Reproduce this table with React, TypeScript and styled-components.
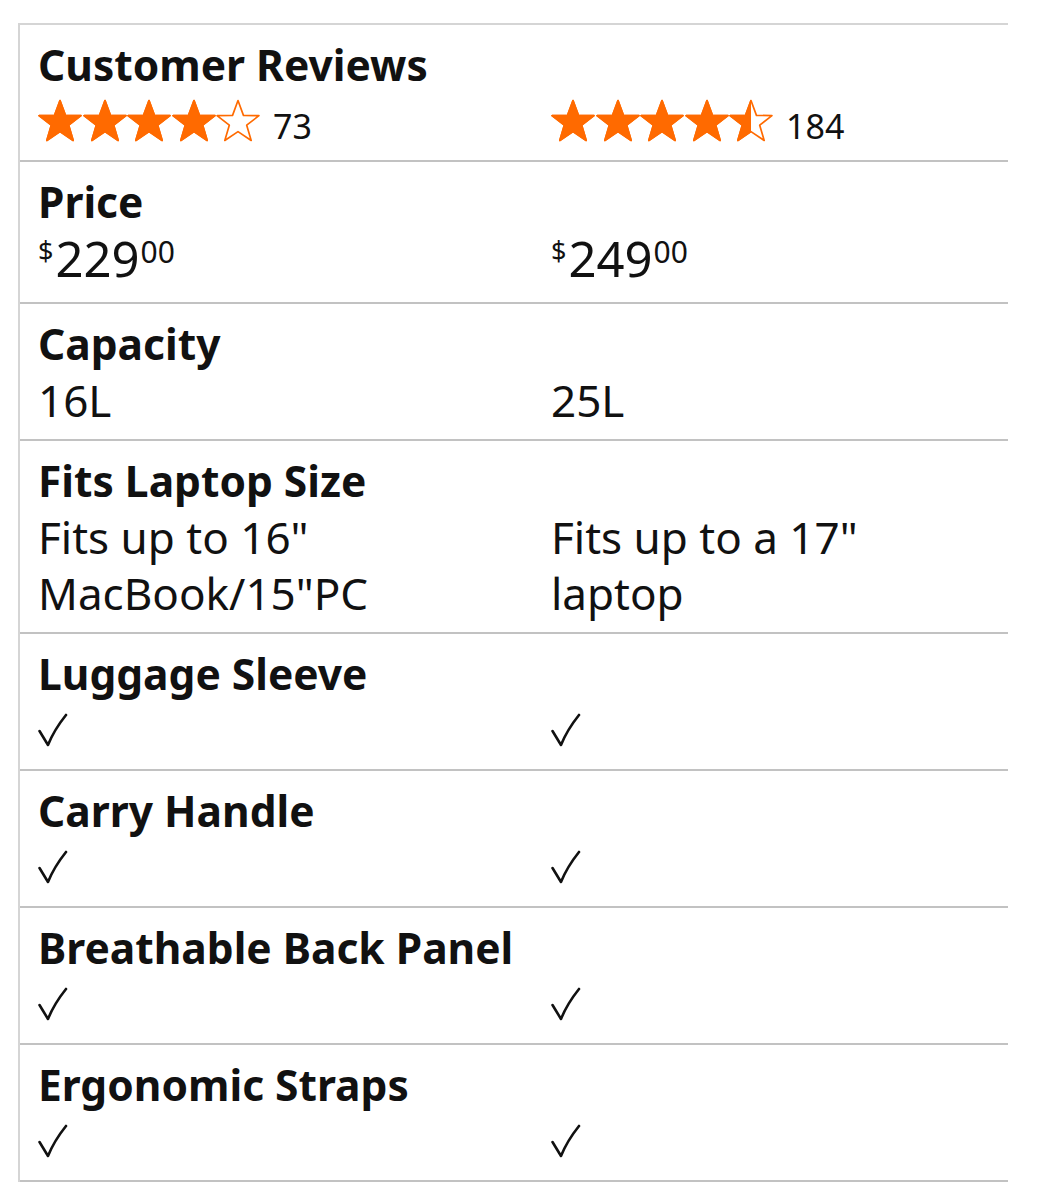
import styled, { createGlobalStyle } from "styled-components";

const GlobalStyle = createGlobalStyle`
	body {
		margin: 0;
		background: #ffffff;
		font-family: "Noto Sans", "Liberation Sans", sans-serif;
		color: #111111;
	}
`;

const Table = styled.div`
	margin: 23px 0 0 18px;
	width: 988px;
	border-top: 2px solid #d5d5d5;
	border-left: 2px solid #d5d5d5;
`;

const Row = styled.div`
	display: grid;
	grid-template-columns: 513px 1fr;
	padding: 12px 0 11px;
	border-bottom: 2px solid #c2c2c2;
	font-size: 44px;
	line-height: 56px;
`;

const Label = styled.div`
	grid-column: 1 / -1;
	padding-left: 18px;
	font-size: 42.5px;
	font-weight: 700;
`;

const Cell = styled.div`
	padding-left: 18px;
`;

const Rating = styled.div`
	display: flex;
	align-items: center;
	gap: 13px;
	height: 56px;
`;

const Stars = styled.div`
	display: flex;
	gap: 0.5px;
`;

const Count = styled.span`
	font-size: 34px;
	line-height: 1;
	margin-top: 9px;
`;

const Price = styled.div`
	display: flex;
	align-items: flex-start;
	height: 61px;
	padding-top: 4px;
	box-sizing: border-box;
	line-height: 1;
`;

const Sup = styled.span<{ size: number }>`
	font-size: ${(p) => p.size}px;
	line-height: 1;
	margin-top: 3px;
`;

const Whole = styled.span`
	font-size: 49px;
	line-height: 1;
	margin: 0 1px 0 2px;
`;

const Check = styled.div`
	display: flex;
	align-items: center;
	height: 56px;
`;

const ORANGE = "#ff6a00";

function Star({ fill }: { fill: number }) {
	const id = `clip-${Math.random().toString(36).slice(2)}`;
	const pts =
		"21,1.5 26.2,15.6 41,15.9 29.3,25 33.6,39.6 21,31.1 8.4,39.6 12.7,25 1,15.9 15.8,15.6";
	return (
		<svg width="44" height="44" viewBox="0 0 42 42">
			<defs>
				<clipPath id={id}>
					<rect x="0" y="0" width={42 * fill} height="42" />
				</clipPath>
			</defs>
			<polygon points={pts} fill="#fff" stroke={ORANGE} strokeWidth="1.6" strokeLinejoin="round" />
			<polygon points={pts} fill={ORANGE} stroke={ORANGE} strokeWidth="1.6" strokeLinejoin="round" clipPath={`url(#${id})`} />
		</svg>
	);
}

function StarRating({ value, count }: { value: number; count: number }) {
	return (
		<Rating>
			<Stars>
				{[0, 1, 2, 3, 4].map((i) => (
					<Star key={i} fill={Math.max(0, Math.min(1, value - i))} />
				))}
			</Stars>
			<Count>{count}</Count>
		</Rating>
	);
}

function PriceTag({ amount }: { amount: string }) {
	return (
		<Price>
			<Sup size={27}>$</Sup>
			<Whole>{amount}</Whole>
			<Sup size={30}>00</Sup>
		</Price>
	);
}

function CheckMark() {
	return (
		<Check>
			<svg width="30" height="36" viewBox="0 0 30 36">
				<path
					d="M1.5 19 L10 33 C14 23 20 13 28 3"
					fill="none"
					stroke="#111"
					strokeWidth="2.6"
					strokeLinecap="round"
					strokeLinejoin="round"
				/>
			</svg>
		</Check>
	);
}

const features = [
	"Luggage Sleeve",
	"Carry Handle",
	"Breathable Back Panel",
	"Ergonomic Straps",
];

export default function App() {
	return (
		<>
			<GlobalStyle />
			<Table>
				<Row>
					<Label>Customer Reviews</Label>
					<Cell>
						<StarRating value={4} count={73} />
					</Cell>
					<Cell>
						<StarRating value={4.5} count={184} />
					</Cell>
				</Row>
				<Row>
					<Label>Price</Label>
					<Cell>
						<PriceTag amount="229" />
					</Cell>
					<Cell>
						<PriceTag amount="249" />
					</Cell>
				</Row>
				<Row>
					<Label>Capacity</Label>
					<Cell>16L</Cell>
					<Cell>25L</Cell>
				</Row>
				<Row>
					<Label>Fits Laptop Size</Label>
					<Cell>
						Fits up to 16"
						<br />
						MacBook/15"PC
					</Cell>
					<Cell>
						Fits up to a 17"
						<br />
						laptop
					</Cell>
				</Row>
				{features.map((f) => (
					<Row key={f}>
						<Label>{f}</Label>
						<Cell>
							<CheckMark />
						</Cell>
						<Cell>
							<CheckMark />
						</Cell>
					</Row>
				))}
			</Table>
		</>
	);
}
